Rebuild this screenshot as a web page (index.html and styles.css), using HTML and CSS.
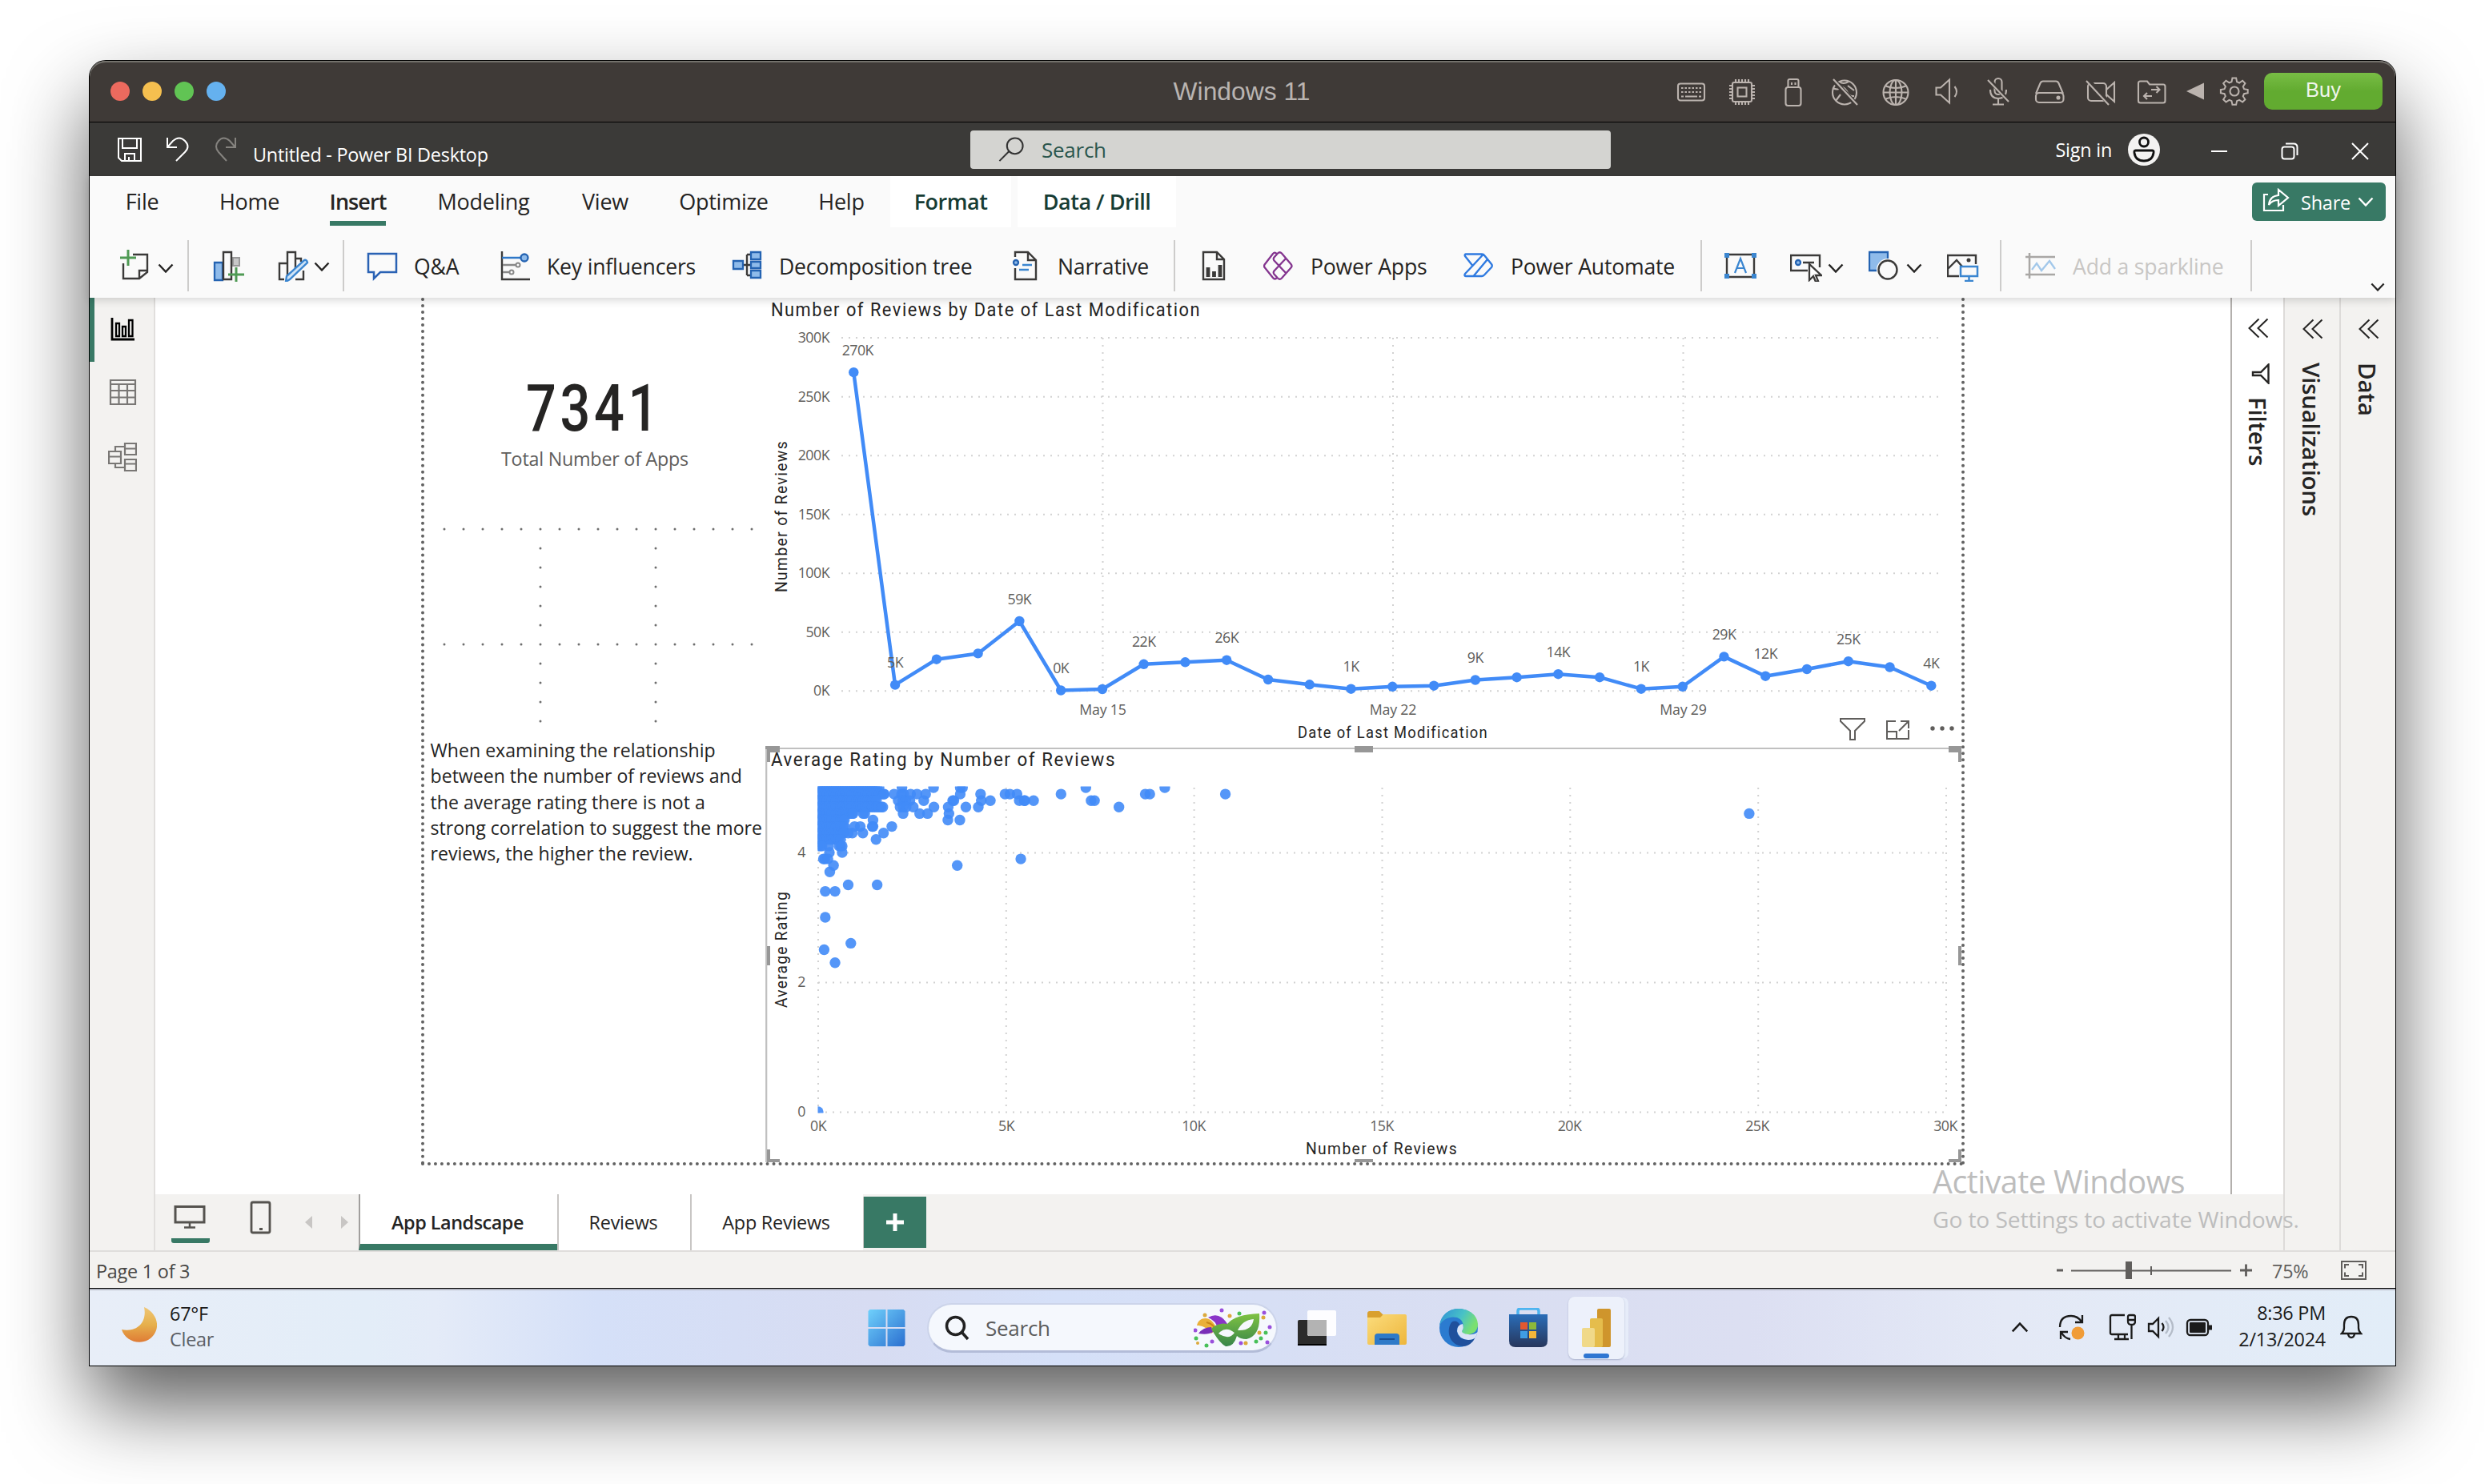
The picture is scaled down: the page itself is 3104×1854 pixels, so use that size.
FILE: index.html
```html
<!DOCTYPE html>
<html lang="en">
<head>
<meta charset="utf-8">
<title>Windows 11</title>
<link rel="stylesheet" href="styles.css">
</head>
<body>
<svg width="0" height="0" class="defs">
  <defs>
    <linearGradient id="gWin" x1="0" y1="0" x2="1" y2="1"><stop offset="0" stop-color="#6fd0fb"/><stop offset="1" stop-color="#2b6fd0"/></linearGradient>
    <linearGradient id="gMoon" x1="0" y1="0" x2="0" y2="1"><stop offset="0" stop-color="#efc675"/><stop offset=".5" stop-color="#e6b04c"/><stop offset="1" stop-color="#df7b35"/></linearGradient>
    <linearGradient id="gFolder" x1="0" y1="0" x2="1" y2="1"><stop offset="0" stop-color="#fbdc7c"/><stop offset="1" stop-color="#eeb63c"/></linearGradient>
    <linearGradient id="gEdge" x1="0" y1="0" x2="1" y2=".4"><stop offset="0" stop-color="#2f8fd8"/><stop offset=".6" stop-color="#48c2c6"/><stop offset="1" stop-color="#7be070"/></linearGradient>
    <linearGradient id="gStore" x1="0" y1="0" x2="0" y2="1"><stop offset="0" stop-color="#2a6db8"/><stop offset="1" stop-color="#27365c"/></linearGradient>
    <linearGradient id="gMask" x1="0" y1="0" x2="0" y2="1"><stop offset="0" stop-color="#7fc242"/><stop offset="1" stop-color="#38864a"/></linearGradient>
    <symbol id="chev" viewBox="0 0 20 12"><path d="M1.5 1.5 10 10.5 18.5 1.5" fill="none" stroke="currentColor" stroke-width="2.4"/></symbol>
    <symbol id="dchev" viewBox="0 0 26 26"><path d="M13.500 1.500 1.500 13 13.500 24.500M24.500 1.500 12.500 13 24.500 24.500" fill="none" stroke="#252423" stroke-width="2"/></symbol>
  </defs>
</svg>
<div class="window">
  <header class="macbar">
    <div class="lights"><i class="red"></i><i class="yellow"></i><i class="green"></i><i class="blue"></i></div>
    <div class="mactitle">Windows 11</div>
    <div class="macicons">
      <svg viewBox="0 0 40 40"><rect x="4" y="9.500" width="33" height="21" rx="3"/><path d="M8 15h25M8 20h25" stroke-dasharray="2.500 2"/><path d="M8 25.500h3M13 25.500h15M30 25.500h3"/></svg>
      <svg viewBox="0 0 40 40"><rect x="8" y="8" width="24" height="24" rx="2"/><rect x="14.500" y="14.500" width="11" height="11"/><path d="M12 4v4M16 4v4M20 4v4M24 4v4M28 4v4M12 32v4M16 32v4M20 32v4M24 32v4M28 32v4M4 12h4M4 16h4M4 20h4M4 24h4M4 28h4M32 12h4M32 16h4M32 20h4M32 24h4M32 28h4"/></svg>
      <svg viewBox="0 0 40 40"><path d="M13.500 14V6q0-2 2-2h9q2 0 2 2v8"/><rect x="10.500" y="14" width="19" height="23" rx="3"/><path d="M18 8v3M22.500 8v3"/></svg>
      <svg viewBox="0 0 40 40"><circle cx="20" cy="20.500" r="15"/><path d="M5 15q7 3 10 0t8 4q2 7 9 6M14 7q4 4 11 0M24 12l8 6M9 31l6-8"/><path d="M5 4 35 36" stroke="#3f3a37" stroke-width="6"/><path d="M6 4 36 36"/></svg>
      <svg viewBox="0 0 40 40"><circle cx="20" cy="20.500" r="15.500"/><ellipse cx="20" cy="20.500" rx="7.500" ry="15.500"/><path d="M20 5v31M4.500 20.500h31M7.500 12.500q12.500 5 25 0M7.500 28.500q12.500-5 25 0"/></svg>
      <svg viewBox="0 0 40 40"><path d="M6.500 14.500h5.500l11-10v29l-11-10H6.500z"/><path d="M29.500 13q5 6.500 0 13"/></svg>
      <svg viewBox="0 0 40 40"><rect x="15.500" y="3" width="9" height="20" rx="4.500"/><path d="M10 17q0 11 10 11t10-11M20 28v7M13 35.500h14"/><path d="M8 4 32 30" stroke="#3f3a37" stroke-width="5"/><path d="M7 5 33 32"/></svg>
      <svg viewBox="0 0 40 40"><path d="M3 22 8.500 9q1-2.500 3.500-2.500h16q2.500 0 3.500 2.500L37 22"/><rect x="3" y="21" width="34.500" height="12" rx="4"/><circle cx="31" cy="27" r="1.500" fill="#bbb3ae"/></svg>
      <svg viewBox="0 0 40 40"><rect x="4" y="9" width="23" height="22" rx="4"/><path d="M27 17l10-9v24l-10-9"/><path d="M3 4 32 36" stroke="#3f3a37" stroke-width="6"/><path d="M2 6 30 36"/></svg>
      <svg viewBox="0 0 40 40"><path d="M3 31V9q0-2.500 2.500-2.500H14l3 4h17q2.500 0 2.500 2.500v18q0 2.500-2.500 2.500H5.500Q3 33.500 3 31z"/><path d="M19 17h10M25.500 13l4 4-4 4M20 25H10M14 21l-4 4 4 4"/></svg>
    </div>
    <svg class="tri" viewBox="0 0 44 40"><path d="M11 20 33 9.500v21z" fill="#bbb3ae"/></svg>
    <svg class="gear" viewBox="0 0 40 40"><path d="M17.500 3.500h5l1 5 3.200 1.400 4.300-2.900 3.500 3.500-2.800 4.300 1.300 3.200 5 1v4.500l-5 1-1.400 3.200 2.900 4.300-3.500 3.500-4.300-2.800-3.200 1.300-1 5h-5l-1-5-3.200-1.400L9 35.500 5.500 32l2.800-4.300L7 24.500l-5-1V19l5-1 1.400-3.200L5.500 10.500 9 7l4.300 2.800 3.200-1.300z" transform="translate(1 .2) scale(.94)" /><circle cx="20" cy="20" r="5.500"/></svg>
    <button class="buy">Buy</button>
  </header>

  <div class="titlebar">
    <div class="quick">
      <svg viewBox="0 0 32 32" class="white"><path d="M2 2h28v28H6l-4-4zM7 2v12h18V2M10 30V21h12v9M15 25v5"/></svg>
      <svg viewBox="0 0 32 32" class="white"><path d="M3 1v12h12M3 13 10 5q8-7 15 0t0 14L14 30"/></svg>
      <svg viewBox="0 0 32 32" class="dim"><path d="M28 1v12H16M28 13 21 5q-8-7-14 0t0 14L17 30"/></svg>
      <span>Untitled - Power BI Desktop</span>
    </div>
    <div class="find">
      <svg viewBox="0 0 34 34"><circle cx="22" cy="12" r="10.500"/><path d="M14 19.500 1.500 32"/></svg>
      <span>Search</span>
    </div>
    <div class="account">
      <span>Sign in</span>
      <svg viewBox="0 0 40 40" class="avatar"><circle cx="20" cy="20" r="20" fill="#f3f2f1"/><g fill="none" stroke="#111" stroke-width="2.800"><circle cx="20" cy="10.500" r="5.500"/><path d="M9.500 21h21q2 0 1.500 3-1.500 10-12 10T8 24q-.5-3 1.500-3z"/></g></svg>
    </div>
    <div class="controls">
      <svg viewBox="0 0 22 22"><path d="M1 11h20"/></svg>
      <svg viewBox="0 0 22 22"><rect x="1.500" y="5.500" width="15" height="15" rx="3"/><path d="M6 1.500h10q4.500 0 4.500 4.500v10"/></svg>
      <svg viewBox="0 0 22 22"><path d="M1 1 21 21M21 1 1 21"/></svg>
    </div>
  </div>

  <div class="ribbon">
    <nav class="menu">
      <a>File</a><a>Home</a><a class="on"><b>Insert</b></a><a>Modeling</a><a>View</a><a>Optimize</a><a>Help</a><a class="ctx">Format</a><a class="ctx">Data / Drill</a>
      <button class="share"><svg viewBox="0 0 34 30" class="shareic"><path d="M7 8H2v20h24v-7M8 21q1-11 12-12V2l12 10-12 10v-7q-8 0-12 6z"/></svg><span>Share</span><svg class="chev"><use href="#chev"/></svg></button>
    </nav>
    <div class="tools">
      <div><svg class="ic" viewBox="0 0 40 40"><g class="k"><path d="M18 6h18v22L26 36H6V17M36 26H26v10"/></g><path class="grn" d="M12 0v20M2 10h20"/></svg><svg class="chev c1"><use href="#chev"/></svg></div>
      <hr>
      <div><svg class="ic" viewBox="0 0 40 40"><path d="M25 10h8v10h-8z" fill="#c8c8c8" stroke="#999" stroke-width="2"/><path class="bl" d="M2 16h10v22H2z"/><path class="k wh" d="M13 3h10v34H13z"/><path class="grn" d="M29 22v18M19 31h20"/></svg></div>
      <div><svg class="ic" viewBox="0 0 40 40"><path class="k" d="M13 37V3h10v22M13 17H3v20h6M23 11h7v4M23 37h10V26"/><path d="M34 13q3-1 4 3L16 37l-5 3 1-7z" fill="#cfe4f7" stroke="#3b86d0" stroke-width="2.400"/></svg><svg class="chev c2"><use href="#chev"/></svg></div>
      <hr>
      <div><svg class="ic" viewBox="0 0 40 40"><path d="M2 5h35v23H17L9 36v-8H2z" fill="none" stroke="#2a62b4" stroke-width="2.500"/></svg><span>Q&amp;A</span></div>
      <div><svg class="ic" viewBox="0 0 40 40"><path class="k" d="M3 2v35h35"/><path d="M3 10h23" stroke="#2f78c8" stroke-width="2.500"/><circle class="bl" cx="31" cy="10" r="4.500"/><path d="M4 19h17M4 28h9" stroke="#888" stroke-width="2.500"/><circle cx="23" cy="19" r="2.500" fill="#fff" stroke="#888" stroke-width="2"/><circle cx="15" cy="28" r="2.500" fill="#fff" stroke="#888" stroke-width="2"/></svg><span>Key influencers</span></div>
      <div><svg class="ic" viewBox="0 0 40 40"><path class="k" d="M14 19h10M19 6v26M19 6h4M19 32h4"/><path class="bl" d="M2 14h12v10H2zM24 3h12v9H24zM24 15h12v8H24zM24 26h12v9H24z"/></svg><span>Decomposition tree</span></div>
      <div><svg class="ic" viewBox="0 0 40 40"><path class="k" d="M6 9V3h16l10 10v24H6V23M22 3v10h10"/><circle class="bl" cx="7" cy="16" r="3"/><path d="M15 19h12M11 25h12" stroke="#3b86d0" stroke-width="2.500"/></svg><span>Narrative</span></div>
      <hr>
      <div><svg class="ic" viewBox="0 0 40 40"><path class="k" d="M5 3h17l9 9v25H5zM22 3v9h9"/><path d="M11 34V22M18.500 34v-7M26 34V19" stroke="#3b3a39" stroke-width="4.800"/></svg></div>
      <div><svg class="ic" viewBox="0 0 40 40"><path d="M17 5.500Q14.500 2 12 5L2 18q-2 2.500 0 4.500L12 35q2.500 3 5 0M18 4.500q2.500-2.500 5 0L34.500 18q2 2.500 0 4.500L23 35.500q-2.500 2.500-5 0L13.500 30.500q-1.500-2 0-4L29 10M18 4.500 13.500 9.500q-1.500 2 0 4L29 30" fill="none" stroke="#84358f" stroke-width="2.300"/></svg><span>Power Apps</span></div>
      <div><svg class="ic" viewBox="0 0 40 40"><path d="M3 5.500h20q2 0 3.500 2L35 18q1.500 2 0 4L26 31.500q-1.500 1.500-3 1.500H3q-2.500-.5-1-3L11.500 20 2 8q-1-2 1-2.500zM24.500 6 11.500 20M30 12 12.500 33" fill="none" stroke="#2f7ae0" stroke-width="2.400" stroke-linejoin="round"/></svg><span>Power Automate</span></div>
      <hr>
      <div><svg class="ic" viewBox="0 0 40 40"><path class="k" d="M3 6h34v28H3z"/><path d="M13 29 20 11l7 18M15.500 23h9" fill="none" stroke="#3b86d0" stroke-width="2.200"/><path d="M0 4h6v6H0zM34 4h6v6h-6zM0 30h6v6H0zM34 30h6v6h-6z" fill="#3b86d0"/></svg></div>
      <div><svg class="ic" viewBox="0 0 40 40"><path class="k" d="M22 26H1V7h36v15M16 16h14"/><circle class="bl" cx="10" cy="16" r="3"/><path d="M24 18v20l5-5 3 7 3-1-3-7h7z" fill="#fff" stroke="#3b3a39" stroke-width="2.300"/></svg><svg class="chev c3"><use href="#chev"/></svg></div>
      <div><svg class="ic" viewBox="0 0 40 40"><path class="bl" d="M1 3h23v23H1z"/><circle cx="24" cy="25" r="14" fill="#fafafa"/><circle class="k wh" cx="24" cy="25" r="11.500"/></svg><svg class="chev c3"><use href="#chev"/></svg></div>
      <div><svg class="ic" viewBox="0 0 40 40"><path class="k" d="M15 33H1V7h35v11M1 24l11-11 7 8"/><circle cx="27" cy="13" r="2.500" fill="#3b3a39"/><path d="M17 21h21v12H17zM27.500 33v6M22 39h11" fill="none" stroke="#3b86d0" stroke-width="2.500"/></svg></div>
      <hr>
      <div class="off"><svg class="ic" viewBox="0 0 40 40"><path d="M5 4v32M0 9h37M0 31h37" stroke="#a9a7a5" stroke-width="2.500"/><path d="M8 25 14 17l6 9 10-12 7 10" fill="none" stroke="#a3c8ea" stroke-width="2.300"/></svg><span>Add a sparkline</span></div>
      <hr>
      <svg class="collapse"><use href="#chev"/></svg>
    </div>
  </div>

  <div class="body">
    <aside class="rail">
      <div class="sel"><svg viewBox="0 0 36 36"><path d="M5 4v27h28" stroke-width="2.800"/><path d="M10 11h4v16h-4zM18 15h4v12h-4zM26 7h4.500v20H26z" stroke-width="2.300"/></svg></div>
      <div><svg viewBox="0 0 36 36" class="gray"><path d="M3 2h31v30H3zM3 7h31M3 15h31M3 23.500h31M13.500 7v25M24 7v25"/></svg></div>
      <div><svg viewBox="0 0 36 36" class="gray"><path d="M1 11h15v15H1zM1 17.500h15M21 1h14v14H21zM21 7.500h14M21 21h14v14H21zM21 26.500h14M9 11V5h12M9 26v5h12"/></svg></div>
    </aside>
    <div class="center">
      <div class="work">
        <div class="canvas">
          <section class="page">
            <div class="left">
              <svg class="card" viewBox="530 372 426 558">
                <text x="742" y="538" class="num" textLength="170" lengthAdjust="spacingAndGlyphs">7341</text>
                <text x="743" y="582" class="cap" textLength="234" lengthAdjust="spacingAndGlyphs">Total Number of Apps</text>
                <g class="grid24"><path d="M555 661H941M555 805H941M675 661V902M819 661V902"/></g>
              </svg>
              <p>When examining the relationship<br>between the number of reviews and<br>the average rating there is not a<br>strong correlation to suggest the more<br>reviews, the higher the review.</p>
            </div>
            <div class="right">
              <svg class="line" id="line" viewBox="956 372 1494 560">
                <text x="963" y="395" class="ttl" textLength="537" lengthAdjust="spacingAndGlyphs">Number of Reviews by Date of Last Modification</text>
                <path class="gl" d="M1051 422H2422M1051 495.700H2422M1051 569.200H2422M1051 642.700H2422M1051 716.300H2422M1051 789.800H2422M1051 863.300H2422M1377.500 422V872M1740 422V872M2102.500 422V872"/>
                <g class="ylab"><text x="1036" y="428">300K</text><text x="1036" y="501.700">250K</text><text x="1036" y="575.200">200K</text><text x="1036" y="648.700">150K</text><text x="1036" y="722.300">100K</text><text x="1036" y="795.800">50K</text><text x="1036" y="869.300">0K</text></g>
                <g class="xlab"><text x="1377.500" y="893">May 15</text><text x="1740" y="893">May 22</text><text x="2102.500" y="893">May 29</text></g>
                <text x="1621" y="922" class="axt" textLength="238" lengthAdjust="spacingAndGlyphs">Date of Last Modification</text>
                <text transform="translate(983 740) rotate(-90)" class="axt" textLength="190" lengthAdjust="spacingAndGlyphs">Number of Reviews</text>
                <g class="hdr"><path d="M2299 898h30v3l-12 12v11h-6v-11l-12-12zM2368 901h-11v22h27v-11M2357 914h12v9M2374 901h10v9M2384 901l-12 12"/></g>
                <g fill="#605e5c"><circle cx="2414" cy="910" r="2.700"/><circle cx="2426" cy="910" r="2.700"/><circle cx="2438" cy="910" r="2.700"/></g>
              </svg>
              <svg class="scatter" id="scatter" viewBox="956 932 1494 520">
                <defs><clipPath id="plot"><rect x="1021.500" y="982.500" width="1410" height="408"/></clipPath></defs>
                <path d="M957.200 1452V935H2450" fill="none" stroke="#c0c0c0" stroke-width="2.200"/>
                <path d="M956 932h18v8h-12v12h-4v-16h-2zM958 1436h4v12h12v4h-16zM958 1182h4v24h-4zM1692 932h23v8h-23zM1692 1448h23v4h-23zM2434 932h16v20h-4v-12h-12zM2446 1436h4v16h-16v-4h12zM2446 1182h4v24h-4z" fill="#979797"/>
                <path class="gl" d="M1022 1065.400H2431M1022 1227.400H2431M1022 1389.400H2431M1022 984V1389M1256.800 984V1389M1491.600 984V1389M1726.500 984V1389M1961.300 984V1389M2196.200 984V1389M2431 984V1389"/>
                <text x="963" y="957" class="ttl" textLength="431" lengthAdjust="spacingAndGlyphs">Average Rating by Number of Reviews</text>
                <g class="ylab"><text x="1006" y="1071">4</text><text x="1006" y="1233">2</text><text x="1006" y="1395">0</text></g>
                <g class="xlab"><text x="1022" y="1413">0K</text><text x="1257" y="1413">5K</text><text x="1491" y="1413">10K</text><text x="1726" y="1413">15K</text><text x="1960.500" y="1413">20K</text><text x="2195" y="1413">25K</text><text x="2430" y="1413">30K</text></g>
                <text x="1631" y="1442" class="axt" textLength="190" lengthAdjust="spacingAndGlyphs">Number of Reviews</text>
                <text transform="translate(983 1259) rotate(-90)" class="axt" textLength="146" lengthAdjust="spacingAndGlyphs">Average Rating</text>
                <g id="points" clip-path="url(#plot)"></g>
              </svg>
            </div>
          </section>
        </div>
        <aside class="filters"><svg class="dc"><use href="#dchev"/></svg><svg class="funnel" viewBox="0 0 24 26"><path d="M21.500 1.500v23L12 15H2v-4h10z"/></svg><b>Filters</b></aside>
      </div>
      <footer class="tabs">
        <div class="modes">
          <div class="desk"><svg viewBox="0 0 40 30"><path d="M2 2.500h36V22H2z" stroke-width="3"/><path d="M20 22v6M13 28.500h14" stroke-width="2.500"/></svg></div>
          <svg class="phone" viewBox="0 0 28 42"><rect x="2" y="2" width="23" height="38" rx="2" stroke-width="2.800"/><path d="M12 35.500h4" stroke-width="3"/></svg>
          <svg class="arr" viewBox="0 0 54 16"><path d="M9 0v16L0 8zM45 0v16l9-8z" fill="#c8c6c4"/></svg>
        </div>
        <a class="tab cur">App Landscape</a><a class="tab t2">Reviews</a><a class="tab t3">App Reviews</a>
        <button class="plus"><svg viewBox="0 0 24 24"><path d="M12 1v22M1 12h22" stroke="#fff" stroke-width="5"/></svg></button>
      </footer>
    </div>
    <aside class="pane vis"><svg class="dc"><use href="#dchev"/></svg><b>Visualizations</b></aside>
    <aside class="pane"><svg class="dc"><use href="#dchev"/></svg><b>Data</b></aside>
    <div class="watermark"><div>Activate Windows</div><span>Go to Settings to activate Windows.</span></div>
  </div>

  <div class="status">
    <span>Page 1 of 3</span>
    <svg class="zoom" viewBox="0 0 250 30"><g stroke="#605e5c" fill="none"><path d="M3 15h8" stroke-width="3"/><path d="M21 15.500h200" stroke-width="2"/><path d="M121 10v11" stroke-width="2"/><path d="M232 15h15M239.500 7.500v15" stroke-width="2.800"/></g><rect x="89" y="4" width="8" height="22" fill="#605e5c"/></svg>
    <span class="pct">75%</span>
    <svg class="fit" viewBox="0 0 32 24"><path d="M1 1h30v22H1zM5 9.500V5h5M22 5h5v4.500M27 14.500V19h-5M10 19H5v-4.500" fill="none" stroke="#605e5c" stroke-width="2"/></svg>
  </div>

  <div class="taskbar">
    <div class="weather">
      <svg viewBox="0 0 44 44"><path d="M28 0c20 9 21 32 5 41-13 7-29 0-33-13 20 4 32-10 28-28z" fill="url(#gMoon)"/></svg>
      <div>67°F<br><span>Clear</span></div>
    </div>
    <div class="apps">
      <svg class="win" viewBox="0 0 46 46"><path d="M2 0h20v22H0V2zM24 0h20l2 2v20H24zM0 24h22v22H2l-2-2zM24 24h22v20l-2 2H24z" fill="url(#gWin)"/></svg>
      <div class="tsearch">
        <svg class="mag" viewBox="0 0 32 32"><circle cx="13.500" cy="13.500" r="11"/><path d="M21 21 29 30"/></svg>
        <span>Search</span>
        <svg class="mask" viewBox="0 0 98 50">
          <path d="M4 22C6 12 18 10 24 18l6 8-8 6C16 24 10 22 4 22z" fill="#eab03a"/><path d="M18 12q14-8 24 8l-12 6q-2-10-12-14z" fill="#8a35c8"/><path d="M6 32q6-8 16-8l2 6q-6 4-18 2z" fill="#7a2fb8"/><path d="M16 18q10 2 12 12" stroke="#c98618" stroke-width="2" fill="none"/>
          <path d="M22 26Q30 18 42 20 52 8 82 7q2 28-16 32-8 0-12-4-4 14-14 13-8-4-18-22z" fill="url(#gMask)"/>
          <path d="M31 32q9-10 20-1-7 10-20 1zM55 28q6-13 20-14-2 15-20 14z" fill="#f6f8fd"/>
          <g fill="#9a50dc"><circle cx="35" cy="3" r="2.500"/><circle cx="88" cy="6" r="2.500"/><circle cx="95" cy="24" r="2.500"/><circle cx="2" cy="28" r="2.500"/><circle cx="59" cy="44" r="2.500"/><circle cx="92" cy="43" r="2.500"/><circle cx="23" cy="42" r="2.500"/></g>
          <g fill="#48c058"><circle cx="57" cy="7" r="2.500"/><circle cx="90" cy="31" r="2.500"/><circle cx="84" cy="38" r="2.500"/><circle cx="78" cy="42" r="2.500"/><circle cx="3" cy="38" r="2.500"/><circle cx="16" cy="47" r="2.500"/></g>
          <g fill="#dba93c"><circle cx="14" cy="9" r="2.500"/><circle cx="45" cy="10" r="2.500"/><circle cx="87" cy="12" r="2.500"/><circle cx="82" cy="31" r="2.500"/><circle cx="65" cy="44" r="2.500"/><circle cx="5" cy="44" r="2"/></g>
        </svg>
      </div>
      <svg class="a1" viewBox="0 0 48 46"><rect y="13" width="36" height="32" rx="2" fill="#2b2b2b"/><path d="M0 43h36v2H0z"/><rect x="12" y="1" width="36" height="32" rx="2" fill="#fff" opacity=".94"/><path d="M12 13h24v20H14l-2-2z" fill="#b3b3b3"/></svg>
      <svg class="a2" viewBox="0 0 50 46"><path d="M0 5q0-3 3-3h12l5 5v9H0z" fill="#d9a02e"/><path d="M0 10h16l4-4h27q2 0 2 2v34q0 2-2 2H2q-2 0-2-2z" fill="url(#gFolder)"/><path d="M9 44V34q0-4 4-4h23q4 0 4 4v10z" fill="#2f7ac8"/><path d="M15 37h19" stroke="#1b4f92" stroke-width="2"/></svg>
      <svg class="a3" viewBox="0 0 50 50"><circle cx="25" cy="25" r="24" fill="#2b7bd0"/><path d="M1 22C3 8 13 1 25 1c14 0 24 9 24 20 0 7-5 12-12 12-6 0-9-2-8-4 3-4 3-14-6-17C14 10 5 14 1 22z" fill="url(#gEdge)"/><path d="M16 18c-6 8-5 28 14 30 7 0 13-5 15-10-8 4-20 2-22-8-1-5 2-8 4-8-2-5-7-7-11-4z" fill="#20509c"/><path d="M29 29q3-4 1-9-7 1-7 9 2 10 14 11 6 0 9-3l3-7q-5 4-12 3-8-1-8-4z" fill="#dbe3f6"/></svg>
      <svg class="a4" viewBox="0 0 48 50"><path d="M11 10V4q0-3 3-3h20q3 0 3 3v6" fill="none" stroke="#4db4f0" stroke-width="3.500"/><path d="M0 8h48v33q0 8-8 8H8q-8 0-8-8z" fill="url(#gStore)"/><path d="M14 18h9v9h-9z" fill="#e2582f"/><path d="M25 18h9v9h-9z" fill="#8cb83a"/><path d="M14 29h9v9h-9z" fill="#3f9de4"/><path d="M25 29h9v9h-9z" fill="#f4b63a"/></svg>
      <div class="pbi"><svg viewBox="0 0 36 48"><rect x="19" width="17" height="48" rx="2" fill="#cf952c"/><rect x="10" y="12" width="16" height="36" rx="2" fill="#e5bd4c"/><rect y="24" width="16" height="24" rx="2" fill="#f0d989"/></svg><i></i></div>
    </div>
    <div class="tray">
      <svg class="up"><use href="#chev"/></svg>
      <svg class="s1" viewBox="0 0 34 34"><path d="M2 17Q2 3 16 3q8 0 13 7M30 2v9h-9M3 32v-9h9M4 24q4 7 11 8"/><circle cx="24.500" cy="24.500" r="8" fill="#f09c38" stroke="none"/></svg>
      <svg class="s1" viewBox="0 0 34 34"><path d="M20 2H4q-2 0-2 2v20q0 2 2 2h20M12 26v6M20 26v6M7 32h18M24 4q0-2 2-2h5q2 0 2 2v6q0 4-4.500 4T24 10zM24 8h9M28.500 14v18"/></svg>
      <svg class="s1" viewBox="0 0 34 34"><path d="M2 13h5l7-7v23l-7-7H2zM18.500 12q4 5 0 10"/><path d="M23 9q7 8 0 16M27 5q10 12 0 24" stroke="#b4bcc8"/></svg>
      <svg class="s1" viewBox="0 0 34 34"><rect x="2" y="8" width="26" height="19" rx="4"/><rect x="5" y="11" width="20" height="13" rx="1" fill="#1b1b1b" stroke="none"/><path d="M31 14.500v6" stroke-width="4"/></svg>
      <div class="clock">8:36 PM<br>2/13/2024</div>
      <svg class="bell" viewBox="0 0 28 30"><path d="M2 23q3-3 3-7v-4q0-10 9-10t9 10v4q0 4 3 7zM10 24q1 4 4 4t4-4"/></svg>
    </div>
  </div>
</div>
<script src="charts.js"></script>
</body>
</html>
```
FILE: styles.css
```css
* { box-sizing: border-box; letter-spacing: -.01em; }
body { margin: 0; background: #fff; height: 1854px; overflow: hidden; font-family: "Open Sans", "Noto Sans", sans-serif; font-size: 23.4px; color: #252423; }
button { border: 0; font: inherit; padding: 0; }
svg { flex: none; display: block; }
.defs { position: absolute; }
.window { width: 2880px; height: 1630px; margin: 76px 0 0 112px; display: flex; flex-direction: column; border-radius: 20px 20px 0 0; box-shadow: 0 0 0 1px #000, 0 50px 100px rgba(0,0,0,.64); }

.macbar { height: 77px; flex: none; background: #3f3a37; border-radius: 20px 20px 0 0; border-bottom: 1px solid #000; box-shadow: inset 0 2px 0 #73716b; display: grid; grid-template-columns: 1300px 278px 390px 640px 44px 55px 1fr; align-items: center; }
.lights { display: flex; gap: 16px; padding-left: 26px; }
.lights i { width: 24px; height: 24px; border-radius: 50%; }
.red { background: #ec6a5e; } .yellow { background: #f5bf4f; } .green { background: #61c454; } .blue { background: #65b1ef; }
.mactitle { text-align: center; font: 31.800px "Liberation Sans", sans-serif; color: #b9b4b1; letter-spacing: 0; }
.macicons { grid-column: 4; display: flex; }
.macicons svg { width: 40px; height: 40px; margin: 2px 12px 0; }
.macicons svg, .gear { fill: none; stroke: #bbb3ae; stroke-width: 2.100; }
.tri { width: 44px; height: 40px; margin-top: -1px; }
.gear { width: 40px; height: 40px; margin-left: 7px; }
.buy { width: 148px; height: 46px; margin-left: 9px; border-radius: 10px; background: linear-gradient(#78bd45, #62ab30 50%); color: #f0f5ea; font: 25.500px "Liberation Sans", sans-serif; letter-spacing: 0; padding-bottom: 4px; }

.titlebar { height: 67px; flex: none; background: #3b3a38; color: #fff; display: grid; grid-template-columns: 1100px 800px 686px 1fr; align-items: center; }
.quick { display: flex; align-items: center; padding-left: 34px; }
.quick svg { width: 32px; height: 32px; margin-right: 28px; fill: none; stroke-width: 2; }
.quick svg + svg + svg { margin-right: 18px; }
.quick span { padding-top: 12px; }
.white { stroke: #fff; } .dim { stroke: #85837f; }
.find { height: 48px; background: #d4d4d1; border-radius: 4px; display: flex; align-items: center; color: #2b564d; font-size: 26px; }
.find svg { width: 32px; height: 32px; margin: 0 22px 0 35px; fill: none; stroke: #333; stroke-width: 2.200; }
.account { display: flex; align-items: center; justify-content: flex-end; gap: 20px; }
.avatar { width: 40px; height: 40px; }
.controls { display: flex; gap: 66px; padding: 4px 0 0 63px; }
.controls svg { width: 22px; height: 22px; fill: none; stroke: #fff; stroke-width: 2; }

.ribbon { height: 152px; flex: none; background: #fafafa; box-shadow: 0 3px 10px rgba(0,0,0,.16); position: relative; z-index: 2; }
.menu { height: 62px; display: grid; grid-template-columns: 131px 137px 134px 180px 124px 172px 122px 151px 206px 1fr; text-align: center; line-height: 64px; font-size: 27px; }
.on b { display: inline-block; height: 62px; border-bottom: 6px solid #387965; font-weight: 600; letter-spacing: -.035em; }
.ctx { background: #fff; font-weight: 600; color: #173c34; letter-spacing: -.018em; }
.ctx + .ctx { margin-left: 8px; }
.share { justify-self: end; width: 167px; height: 48px; margin: 8px 12px 0 0; border-radius: 6px; background: #387965; color: #fff; font-size: 23.500px; display: flex; align-items: center; padding-left: 13px; }
.share span { padding-top: 1px; }
.shareic { width: 34px; height: 30px; fill: none; stroke: #fff; stroke-width: 2.200; margin: -5px 14px 0 0; }
.chev { width: 20px; height: 12px; color: #252423; }
.share .chev { color: #fff; margin-left: 9px; }
.tools { height: 64px; margin-top: 18px; padding-left: 36px; display: grid; grid-template-columns: 86px 32px 80px 82px 30px 166px 290px 348px 204px 32px 80px 250px 296px 30px 82px 98px 98px 66px 32px 281px 150px 1fr; font-size: 26.600px; }
.tools div { display: flex; align-items: center; white-space: nowrap; }
.tools span { padding-top: 2px; letter-spacing: -.007em; }
.tools hr { width: 2px; height: 64px; margin: 0; border: 0; background: #cdcccb; }
.ic { width: 40px; height: 40px; margin-right: 19px; fill: none; }
.k { fill: none; stroke: #3b3a39; stroke-width: 2.400; }
.wh { fill: #fafafa; }
.bl { fill: #8fbbea; stroke: #2463b2; stroke-width: 2.300; }
.grn { stroke: #4f9a54; stroke-width: 3; }
.c1 { margin: 5px 0 0 -10px; } .c2 { margin: 2px 0 0 -13px; } .c3 { margin: 5px 0 0 -12px; }
.off { color: #c8c6c4; }
.collapse { width: 18px; height: 11px; align-self: end; color: #252423; }

.body { flex: 1; display: flex; position: relative; background: #fff; }
.rail { width: 82px; background: #f3f2f0; border-right: 2px solid #e1dfdd; }
.rail div { height: 80px; display: flex; align-items: center; padding: 0 0 2px 23px; }
.rail .sel { border-left: 6px solid #387965; padding-left: 17px; }
.rail svg { width: 36px; height: 36px; fill: none; stroke: #000; }
.rail .gray { stroke: #797775; stroke-width: 2.200; }
.center { width: 2658px; display: flex; flex-direction: column; }
.work { height: 1120px; display: flex; }
.canvas { width: 2592px; padding-left: 332px; }
.page { width: 1928px; height: 1084px; border: 4px dotted #636363; border-top: 0; display: flex; }
.left { width: 426px; }
.card { width: 426px; height: 558px; }
.num { font: 500 81px Roboto, sans-serif; letter-spacing: .07em; text-anchor: middle; fill: #252423; }
.cap { font-size: 24px; text-anchor: middle; fill: #605e5c; }
.grid24 path { fill: none; stroke: #6e6e6e; stroke-width: 3; stroke-linecap: round; stroke-dasharray: 0 24; }
.left p { margin: -9px 0 0 8px; line-height: 32.300px; font-size: 23.100px; letter-spacing: 0; white-space: nowrap; }
.right { width: 1494px; }
.line { width: 1494px; height: 560px; }
.scatter { width: 1494px; height: 520px; }
.ttl { font: 24px Roboto, sans-serif; letter-spacing: .07em; fill: #252423; }
.axt { font: 20.500px Roboto, sans-serif; letter-spacing: .07em; fill: #252423; }
.ylab, .xlab, .dlab { font-size: 17.800px; fill: #605e5c; text-anchor: middle; }
.ylab text, .dlab text, .xlab text { letter-spacing: -.03em; }
.line .xlab text { letter-spacing: -.01em; }
.ylab { text-anchor: end; }
.gl { fill: none; stroke: #d2d2d2; stroke-width: 2; stroke-dasharray: 2 7; }
.series { fill: none; stroke: #418bf7; stroke-width: 4.500; stroke-linejoin: round; }
.dot { fill: #418bf7; }
.pt { fill: #418bf7; fill-opacity: .9; }
.hdr { fill: none; stroke: #605e5c; stroke-width: 2; }
.filters, .pane { display: flex; flex-direction: column; }
.filters { width: 66px; border-left: 2px solid #b3b0ad; padding: 25px 0 0 20px; }
.dc { width: 26px; height: 26px; }
.funnel { width: 24px; height: 26px; margin: 31px 0 0 4px; fill: none; stroke: #252423; stroke-width: 2.400; }
.filters b, .pane b { align-self: flex-start; writing-mode: vertical-rl; font-size: 29.600px; font-weight: 600; line-height: 40px; }
.filters b { margin: 16px 0 0 -8px; }
.pane { width: 70px; background: #f3f2f0; border-left: 2px solid #dddbd9; padding: 26px 0 0 22px; }
.pane b { margin: 29px 0 0 -9px; }
.pane.vis { width: 71px; }
.tabs { height: 70px; background: #f3f2f0; display: flex; }
.modes { width: 254px; display: flex; padding-left: 20px; }
.desk { width: 48px; height: 61px; border-bottom: 6px solid #387965; border-radius: 3px; padding: 13px 4px 0 3px; }
.desk svg { width: 40px; height: 30px; }
.desk svg, .phone { fill: none; stroke: #55534f; }
.phone { width: 28px; height: 42px; margin: 8px 0 0 50px; }
.arr { width: 54px; height: 16px; margin: 27px 0 0 41px; }
.tab { background: #fff; border-left: 2px solid #c8c6c4; text-align: center; line-height: 71px; width: 166px; padding-right: 2px; }
.cur { width: 248px; border-left-color: #a19f9d; border-bottom: 8px solid #387965; font-weight: 600; letter-spacing: -.02em; }
.t3 { width: 216px; }
.plus { width: 79px; height: 64px; margin-top: 3px; background: #387965; border-left: 1px solid #c8c6c4; display: grid; place-items: center; }
.plus svg { width: 24px; height: 24px; }
.watermark { position: absolute; left: 2302px; top: 1079px; color: #bdbdbd; white-space: nowrap; font-size: 28.200px; line-height: 44px; }
.watermark span { letter-spacing: -.004em; }
.watermark div { font-size: 39.300px; line-height: 50px; letter-spacing: -.012em; }

.status { height: 48px; flex: none; background: #f3f2f0; border-top: 2px solid #dfdddb; border-bottom: 1px solid #000; display: flex; align-items: center; padding: 2px 36px 0 8px; color: #484644; }
.zoom { width: 250px; height: 30px; margin: -1px 22px 0 auto; }
.pct { width: 86px; color: #605e5c; }
.fit { width: 32px; height: 24px; margin-top: -2px; }

.taskbar { flex: 1; border-top: 2px solid #b4b8c4; display: grid; grid-template-columns: 972px 1428px 1fr; align-items: center; background: linear-gradient(90deg, #e8eef8, #e3edf8 12%, #e4ebf8 15%, #d5e0f8 22%, #d7dcf2 34%, #d5e0f8 42%, #d9def2 60%, #dcdff2 72%, #e4e9f6 83%, #e2edf8 100%); }
.weather { display: flex; padding-left: 40px; gap: 16px; line-height: 32.500px; color: #1b1b1b; margin-top: -4px; }
.weather svg { width: 44px; height: 44px; margin-top: 8px; }
.weather span { color: #5c6066; }
.apps { display: flex; align-items: center; }
.win { width: 47px; height: 46px; }
.tsearch { width: 438px; height: 62px; margin-left: 27px; border: 2px solid #ccd4ea; border-bottom: 3px solid #b3bcd8; border-radius: 31px; background: #f5f8fd; display: flex; align-items: center; font-size: 26px; color: #5c5c5c; }
.mag { width: 32px; height: 32px; margin: 0 19px 0 20px; fill: none; stroke: #222; stroke-width: 3.500; }
.mask { width: 98px; height: 50px; margin: 0 5px 0 auto; }
.a1 { width: 48px; height: 46px; margin-left: 25px; }
.a2 { width: 50px; height: 46px; margin-left: 39px; }
.a3 { width: 50px; height: 50px; margin-left: 39px; }
.a4 { width: 48px; height: 50px; margin-left: 38px; }
.pbi { width: 70px; height: 78px; margin-left: 26px; border-radius: 8px; background: #edf1fb; box-shadow: 0 1px 2px #aab2cc, 6px 0 0 -1px #e6ecf9; display: flex; flex-direction: column; align-items: center; padding-top: 15px; gap: 8px; }
.pbi svg { width: 36px; height: 48px; }
.pbi i { width: 32px; height: 6px; border-radius: 3px; background: #2f76d2; }
.tray { display: flex; align-items: center; color: #1b1b1b; margin-top: -2px; }
.up { width: 22px; height: 13px; transform: scaleY(-1); margin-right: 37px; }
.s1, .bell { fill: none; stroke: #1b1b1b; stroke-width: 2.300; }
.s1 { width: 34px; height: 34px; margin-right: 14px; }
.up + .s1 { margin-right: 29px; }
.clock { width: 127px; text-align: right; line-height: 32.500px; margin: -3px 18px 0 0; }
.bell { width: 28px; height: 30px; }
```
FILE: charts.js
```js
const NS = 'http://www.w3.org/2000/svg';
function add(parent, tag, attrs, text) {
  const el = document.createElementNS(NS, tag);
  for (const k in attrs) el.setAttribute(k, attrs[k]);
  if (text) el.textContent = text;
  parent.appendChild(el);
  return el;
}

// Reviews per day, as y positions on the 300K axis
const ys = [465.2, 855.6, 823.7, 816.4, 776, 862.5, 861, 829.8, 827.3, 824.7, 849, 855.3, 860.7, 857.8, 856.7, 849.5, 846.2, 842.2, 846.2, 860.7, 857.8, 820.4, 844.7, 836, 826.2, 833.5, 856.7];
const labels = { 0: '270K', 1: '5K', 4: '59K', 5: '0K', 7: '22K', 9: '26K', 12: '1K', 15: '9K', 17: '14K', 19: '1K', 21: '29K', 22: '12K', 24: '25K', 26: '4K' };
const line = document.getElementById('line');
const xAt = i => 1066.3 + i * 51.77;
add(line, 'polyline', { class: 'series', points: ys.map((y, i) => xAt(i) + ',' + y).join(' ') });
ys.forEach((y, i) => add(line, 'circle', { class: 'dot', cx: xAt(i), cy: y, r: 6.2 }));
const g = add(line, 'g', { class: 'dlab' });
for (const i in labels) add(g, 'text', { x: xAt(+i) + (i === '0' ? 5 : 0), y: ys[i] - 21.5 }, labels[i]);

// Apps by rating: [rating, dense run up to (K reviews), single values (K reviews)]
const rows = [
  [5.0, 1.62, [2.23, 3.07, 3.78, 3.84, 7.12, 9.22]],
  [4.9, 1.76, [2.02, 2.22, 2.28, 2.46, 2.63, 2.86, 3.78, 4.32, 4.97, 5.1, 5.29, 6.46, 8.7, 8.82, 10.83]],
  [4.8, 1.55, [2.13, 2.25, 2.33, 2.44, 2.81, 3.58, 3.61, 4.34, 4.58, 5.35, 5.48, 5.5, 5.73, 7.26, 7.35]],
  [4.7, 1.72, [2.18, 2.26, 2.34, 2.53, 3.08, 3.46, 3.93, 4.26, 8]],
  [4.6, 0.93, [1.2, 1.24, 2.26, 2.7, 2.91, 3.48, 24.76]],
  [4.5, 0.7, [1.46, 3.45, 3.77]],
  [4.4, 0.7, [0.97, 1.12, 1.44, 1.46, 1.96]],
  [4.3, 0.68, [0.8, 0.91, 1.19, 1.74]],
  [4.2, 0.6, [1.54]],
  [4.1, 0.1, [0.28, 0.56, 0.6, 0.64]],
  [4.0, -1, [0.3, 0.64]],
  [3.9, -1, [0.14, 0.18, 0.26, 5.39]],
  [3.8, -1, [0.41, 3.7]],
  [3.7, -1, [0.31]],
  [3.5, -1, [0.8, 1.57]],
  [3.4, -1, [0.19, 0.45]],
  [3.0, -1, [0.19]],
  [2.6, -1, [0.87]],
  [2.5, -1, [0.16]],
  [2.3, -1, [0.45]],
  [0, -1, [0]]
];
const pts = document.getElementById('points');
for (const [rating, dense, singles] of rows) {
  const ks = singles.slice();
  for (let k = 0; k <= dense; k += 0.06) ks.push(k);
  if (dense > 0) ks.push(dense);
  for (const k of ks) add(pts, 'circle', { class: 'pt', cx: 1021.9 + k * 46.97, cy: 1389 - rating * 81, r: 6.7 });
}
```
